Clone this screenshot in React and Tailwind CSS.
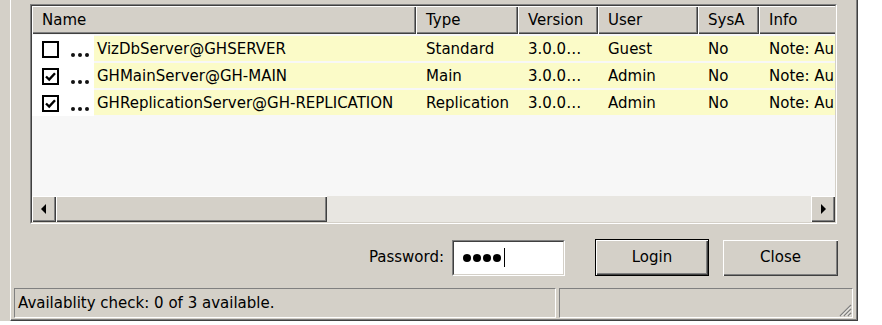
import { useState } from "react";

const rows = [
  { checked: false, name: "VizDbServer@GHSERVER", type: "Standard", version: "3.0.0…", user: "Guest", sys: "No", info: "Note: Au" },
  { checked: true, name: "GHMainServer@GH-MAIN", type: "Main", version: "3.0.0…", user: "Admin", sys: "No", info: "Note: Au" },
  { checked: true, name: "GHReplicationServer@GH-REPLICATION", type: "Replication", version: "3.0.0…", user: "Admin", sys: "No", info: "Note: Au" },
];

const raised = "shadow-[inset_1px_1px_#ffffff,inset_-1px_-1px_#404040,inset_-2px_-2px_#808080]";

function CheckBox({ checked }) {
  return (
    <div className="w-[17px] h-[17px] border-2 border-black bg-white flex items-center justify-center shrink-0">
      {checked && (
        <svg width="11" height="10" viewBox="0 0 11 10">
          <path d="M1 4.5 L4.2 7.6 L10 1.2" fill="none" stroke="#000" strokeWidth="2.4" />
        </svg>
      )}
    </div>
  );
}

function Dots() {
  return (
    <div className="flex gap-[3px] items-end h-[17px] pb-[1px] shrink-0">
      <span className="w-[4px] h-[4px] rounded-full bg-[#111]" />
      <span className="w-[4px] h-[4px] rounded-full bg-[#111]" />
      <span className="w-[4px] h-[4px] rounded-full bg-[#111]" />
    </div>
  );
}

function Arrow({ dir }) {
  return (
    <svg width="6" height="10" viewBox="0 0 6 10">
      {dir === "left" ? <path d="M5 0 L0 5 L5 10 Z" fill="#000" /> : <path d="M1 0 L6 5 L1 10 Z" fill="#000" />}
    </svg>
  );
}

export default function App() {
  const [pwLength] = useState(4);

  return (
    <div className="w-[882px] h-[325px] bg-white flex overflow-hidden text-[15px] text-black" style={{ fontFamily: '"DejaVu Sans", sans-serif' }}>
      <div className="w-[10px] h-[321px] bg-[#d4d0c8] shrink-0" />

      {/* dialog window */}
      <div className="w-[848px] h-[321px] bg-[#d4d0c8] border-l border-l-white border-r border-b border-[#404040] shadow-[inset_-1px_-1px_#808080] flex flex-col pl-[19px] pt-[4px] shrink-0">
        {/* list view */}
        <div className="w-[807px] h-[220px] border border-t-[#808080] border-l-[#808080] border-b-white border-r-white">
          <div className="w-full h-full border border-t-[#404040] border-l-[#404040] border-b-[#d4d0c8] border-r-[#d4d0c8] bg-[#f7f7f7] flex flex-col overflow-hidden">
            {/* header */}
            <div className="flex h-[28px] shrink-0 bg-[#d4d0c8]">
              {[
                ["Name", "w-[384px]"],
                ["Type", "w-[102px]"],
                ["Version", "w-[80px]"],
                ["User", "w-[100px]"],
                ["SysA", "w-[61px]"],
                ["Info", "w-[90px]"],
              ].map(([label, w]) => (
                <div key={label} className={`${w} shrink-0 h-full flex items-center pl-[10px] pt-[1px] ${raised}`}>
                  {label}
                </div>
              ))}
            </div>

            {/* rows */}
            <div className="flex flex-col pt-[1px]">
              {rows.map((r) => (
                <div key={r.name} className="flex h-[27px] items-stretch">
                  <div className="w-[62px] shrink-0 flex items-center gap-[12px] pl-[10px] pt-[2px] bg-white">
                    <CheckBox checked={r.checked} />
                    <Dots />
                  </div>
                  <div className="flex-1 flex items-center bg-[#fbfbc8] my-[1px] pt-[2px] whitespace-nowrap overflow-hidden">
                    <div className="w-[322px] shrink-0 pl-[3px]">{r.name}</div>
                    <div className="w-[102px] shrink-0 pl-[10px]">{r.type}</div>
                    <div className="w-[80px] shrink-0 pl-[10px]">{r.version}</div>
                    <div className="w-[100px] shrink-0 pl-[10px]">{r.user}</div>
                    <div className="w-[61px] shrink-0 pl-[10px]">{r.sys}</div>
                    <div className="w-[90px] shrink-0 pl-[10px]">{r.info}</div>
                  </div>
                </div>
              ))}
            </div>

            <div className="flex-1" />

            {/* horizontal scrollbar */}
            <div className="h-[26px] flex shrink-0 bg-[#e8e6e1]">
              <div className={`w-[24px] h-full bg-[#d4d0c8] flex items-center justify-center ${raised}`}>
                <Arrow dir="left" />
              </div>
              <div className={`w-[271px] h-full bg-[#d4d0c8] ${raised}`} />
              <div className="flex-1" />
              <div className={`w-[24px] h-full bg-[#d4d0c8] flex items-center justify-center ${raised}`}>
                <Arrow dir="right" />
              </div>
            </div>
          </div>
        </div>

        {/* password / buttons */}
        <div className="w-[808px] flex items-center justify-end mt-[15px] h-[37px]">
          <span className="mr-[8px]">Password:</span>
          <div className="w-[113px] h-[36px] border border-t-[#808080] border-l-[#808080] border-b-white border-r-white">
            <div className="w-full h-full border border-t-[#404040] border-l-[#404040] border-b-[#d4d0c8] border-r-[#d4d0c8] bg-white flex items-center pl-[9px] gap-[2px]">
              {Array.from({ length: pwLength }).map((_, i) => (
                <span key={i} className="w-[8px] h-[8px] rounded-full bg-black" />
              ))}
              <span className="w-[1px] h-[19px] bg-black ml-[1px]" />
            </div>
          </div>
          <button className="ml-[30px] w-[114px] h-[37px] border border-black bg-[#d4d0c8]">
            <div className={`w-full h-full flex items-center justify-center ${raised}`}>Login</div>
          </button>
          <button className={`ml-[14px] w-[115px] h-[36px] bg-[#d4d0c8] flex items-center justify-center ${raised}`}>
            Close
          </button>
        </div>

        {/* status bar */}
        <div className="flex h-[30px] mt-[12px] -ml-[16px] gap-[3px]">
          <div className="w-[542px] h-full border border-t-[#808080] border-l-[#808080] border-b-white border-r-white flex items-center pl-[3px] whitespace-nowrap">
            Availablity check: 0 of 3 available.
          </div>
          <div className="w-[294px] h-full border border-t-[#808080] border-l-[#808080] border-b-white border-r-white flex items-end justify-end">
            <svg width="14" height="14" viewBox="0 0 14 14">
              <path d="M13 2 L2 13 M13 6 L6 13 M13 10 L10 13" stroke="#808080" strokeWidth="1.3" />
              <path d="M13 3.5 L3.5 13 M13 7.5 L7.5 13 M13 11.5 L11.5 13" stroke="#ffffff" strokeWidth="0.8" />
            </svg>
          </div>
        </div>
      </div>
    </div>
  );
}
